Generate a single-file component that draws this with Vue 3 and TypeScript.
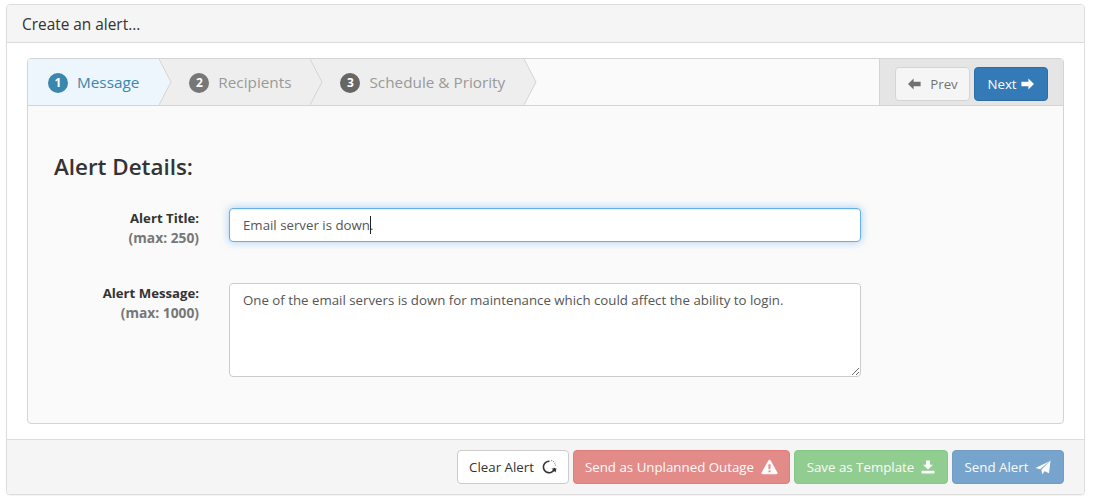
<script setup lang="ts">
import { ref } from 'vue';

// wizard steps shown along the top bar
const steps = [
  { num: 1, label: 'Message', active: true },
  { num: 2, label: 'Recipients', active: false },
  { num: 3, label: 'Schedule & Priority', active: false },
];

const title = ref('Email server is down.');
const message = ref('One of the email servers is down for maintenance which could affect the ability to login.');
</script>

<template>
  <div class="page">
    <section class="panel">
      <header class="panel-heading">Create an alert...</header>

      <div class="panel-body">
        <div class="wizard">
          <div class="wizard-bar">
            <ul class="steps">
              <li v-for="step in steps" :key="step.num" class="step" :class="{ active: step.active }">
                <span class="badge">{{ step.num }}</span>
                <span>{{ step.label }}</span>
                <svg class="chevron" width="14" height="46" viewBox="0 0 14 46">
                  <path d="M0 0 L12 23 L0 46 Z" class="chevron-fill" />
                  <path d="M0 0 L12 23 L0 46" class="chevron-line" />
                </svg>
              </li>
            </ul>
            <div class="wizard-actions">
              <button class="btn btn-prev" type="button">
                <svg width="14" height="14" viewBox="0 0 14 14"><path d="M6.6 1.6 L1 7 L6.6 12.4 L6.6 9.2 L13.6 9.2 L13.6 4.8 L6.6 4.8 Z" fill="currentColor" /></svg>
                Prev
              </button>
              <button class="btn btn-next" type="button">
                Next
                <svg width="14" height="14" viewBox="0 0 14 14"><path d="M7.4 1.6 L13 7 L7.4 12.4 L7.4 9.2 L0.4 9.2 L0.4 4.8 L7.4 4.8 Z" fill="currentColor" /></svg>
              </button>
            </div>
          </div>

          <div class="wizard-body">
            <h3 class="section-title">Alert Details:</h3>
            <div class="form-row title-row">
              <label class="field-label">
                <strong>Alert Title:</strong>
                <small>(max: 250)</small>
              </label>
              <div class="input-wrap">
                <input v-model="title" class="control focused" type="text" />
                <span class="caret"></span>
              </div>
            </div>
            <div class="form-row">
              <label class="field-label">
                <strong>Alert Message:</strong>
                <small>(max: 1000)</small>
              </label>
              <textarea v-model="message" class="control area"></textarea>
            </div>
          </div>
        </div>
      </div>

      <footer class="panel-footer">
        <button class="btn btn-clear" type="button">
          Clear Alert
          <svg width="16" height="16" viewBox="0 0 16 16">
            <path d="M8.5 2.3 A5.7 5.7 0 1 0 13.7 9" fill="none" stroke="#333" stroke-width="1.6" />
            <path d="M10.6 9.6 L15.4 9.4 L14.6 13.4 Z" fill="#333" />
            <path d="M10.4 2.2 L10.8 1 M12 3.1 L12.8 2.1 M13.2 4.5 L14.3 3.9 M13.9 6.2 L15.1 6" stroke="#888" stroke-width="1" />
          </svg>
        </button>
        <button class="btn btn-red" type="button">
          Send as Unplanned Outage
          <svg width="17" height="16" viewBox="0 0 17 16"><path fill-rule="evenodd" d="M8.5 0.8 C9 0.8 9.4 1 9.7 1.5 L16.4 13.4 C16.9 14.3 16.3 15.2 15.3 15.2 L1.7 15.2 C0.7 15.2 0.1 14.3 0.6 13.4 L7.3 1.5 C7.6 1 8 0.8 8.5 0.8 Z M7.4 5.2 L7.6 10.2 L9.4 10.2 L9.6 5.2 Z M7.5 11.4 L7.5 13.2 L9.5 13.2 L9.5 11.4 Z" fill="currentColor" /></svg>
        </button>
        <button class="btn btn-green" type="button">
          Save as Template
          <svg width="14" height="14" viewBox="0 0 14 14"><path d="M5 0.5 L9 0.5 L9 4.8 L12 4.8 L7 9.6 L2 4.8 L5 4.8 Z M0.5 10.8 L13.5 10.8 L13.5 13.5 L0.5 13.5 Z" fill="currentColor" /></svg>
        </button>
        <button class="btn btn-blue" type="button">
          Send Alert
          <svg width="16" height="15" viewBox="0 0 16 15"><path d="M15.6 0.3 L14 13.2 L9.6 11.2 L7.2 14.6 L6.4 9.8 Z M14 1.6 L0.4 8 L5.2 9.2 Z" fill="currentColor" /></svg>
        </button>
      </footer>
    </section>
  </div>
</template>

<style>
html,
body {
  margin: 0;
  background: #fff;
}
</style>

<style scoped>
.page {
  width: 1093px;
  height: 501px;
  padding: 4px 8px 6px 6px;
  box-sizing: border-box;
  font-family: "Open Sans", "Noto Sans", sans-serif;
  font-size: 13.3px;
  color: #333;
}

.panel {
  display: flex;
  flex-direction: column;
  height: 491px;
  box-sizing: border-box;
  border: 1px solid #ddd;
  border-radius: 4px;
  box-shadow: 0 1px 1px rgba(0, 0, 0, 0.05);
}

.panel-heading {
  height: 37px;
  padding-left: 15px;
  font-size: 15.4px;
  line-height: 39px;
  color: #333;
  background: #f5f5f5;
  border-bottom: 1px solid #ddd;
  border-radius: 3px 3px 0 0;
}

.panel-body {
  flex: 1;
  padding: 15px 20px;
}

.wizard {
  height: 366px;
  box-sizing: border-box;
  border: 1px solid #d4d4d4;
  border-radius: 4px;
  background: #fafafa;
}

.wizard-bar {
  display: flex;
  justify-content: space-between;
  height: 47px;
  box-sizing: border-box;
  background: #fafafa;
  border-bottom: 1px solid #d4d4d4;
  border-radius: 3px 3px 0 0;
}

.steps {
  display: flex;
  margin: 0;
  padding: 0;
  list-style: none;
}

.step {
  position: relative;
  display: flex;
  align-items: center;
  gap: 9px;
  height: 46px;
  padding: 0 19px 0 30px;
  font-size: 15.3px;
  color: #999;
  background: #eee;
  --step-bg: #eee;
}

.step.active {
  padding: 0 20px;
  color: #3a87ad;
  background: #edf6fc;
  --step-bg: #edf6fc;
  border-radius: 3px 0 0 0;
}

.badge {
  width: 20px;
  height: 20px;
  margin-top: 2px;
  border-radius: 50%;
  font-size: 12px;
  font-weight: 700;
  line-height: 20px;
  text-align: center;
  color: #fff;
  background: #777;
}

.step.active .badge {
  background: #3a87ad;
}

.step:nth-child(3) .badge {
  background: #666;
}

.chevron {
  position: absolute;
  top: 0;
  left: 100%;
  z-index: 1;
}

.chevron-fill {
  fill: var(--step-bg);
}

.chevron-line {
  fill: none;
  stroke: #d4d4d4;
  stroke-width: 1;
}

.wizard-actions {
  display: flex;
  gap: 4px;
  width: 184px;
  height: 46px;
  box-sizing: border-box;
  padding: 8px 15px 0;
  background: #e5e5e5;
  border-left: 1px solid #d4d4d4;
  border-radius: 0 3px 0 0;
}

.btn {
  display: inline-flex;
  align-items: center;
  justify-content: center;
  gap: 7px;
  height: 34px;
  box-sizing: border-box;
  padding: 0;
  border: 1px solid transparent;
  border-radius: 4px;
  font-family: inherit;
  font-size: 13.3px;
  white-space: nowrap;
  color: #fff;
}

.btn-prev {
  width: 75px;
  gap: 9px;
  color: #333;
  background: #fff;
  border-color: #ccc;
  opacity: 0.65;
}

.btn-next {
  width: 74px;
  gap: 4px;
  background: #337ab7;
  border-color: #2e6da4;
}

.wizard-body {
  padding: 46px 0 0 26px;
}

.section-title {
  margin: 0;
  font-size: 22.4px;
  font-weight: 600;
  line-height: 30px;
  color: #333;
}

.form-row {
  display: grid;
  grid-template-columns: 145px 632px;
  column-gap: 30px;
}

.title-row {
  margin: 26px 0 35px;
}

.field-label {
  display: flex;
  flex-direction: column;
  align-items: flex-end;
  line-height: 20px;
}

.field-label strong {
  font-size: 13.2px;
  font-weight: 700;
}

.field-label small {
  font-size: 13.8px;
  font-weight: 700;
  color: #777;
}

.input-wrap {
  position: relative;
}

.control {
  display: block;
  width: 100%;
  box-sizing: border-box;
  padding: 6px 13px;
  border: 1px solid #ccc;
  border-radius: 4px;
  outline: none;
  font-family: inherit;
  font-size: 13.27px;
  line-height: 20px;
  color: #555;
  background: #fff;
}

.focused {
  height: 34px;
  border-color: #66afe9;
  box-shadow: inset 0 1px 1px rgba(0, 0, 0, 0.075), 0 0 8px rgba(102, 175, 233, 0.6);
}

.caret {
  position: absolute;
  top: 8px;
  left: 141px;
  width: 1px;
  height: 18px;
  background: #222;
}

.area {
  height: 94px;
  resize: vertical;
}

.panel-footer {
  display: flex;
  justify-content: flex-end;
  gap: 4px;
  height: 55px;
  box-sizing: border-box;
  padding: 10px 20px 0 0;
  background: #f5f5f5;
  border-top: 1px solid #ddd;
  border-radius: 0 0 3px 3px;
}

.btn-clear {
  width: 112px;
  color: #333;
  background: #fff;
  border-color: #ccc;
}

.btn-red {
  width: 217px;
  background: #d9534f;
  border-color: #d43f3a;
  opacity: 0.65;
}

.btn-green {
  width: 154px;
  background: #5cb85c;
  border-color: #4cae4c;
  opacity: 0.65;
}

.btn-blue {
  width: 112px;
  background: #337ab7;
  border-color: #2e6da4;
  opacity: 0.65;
}
</style>
